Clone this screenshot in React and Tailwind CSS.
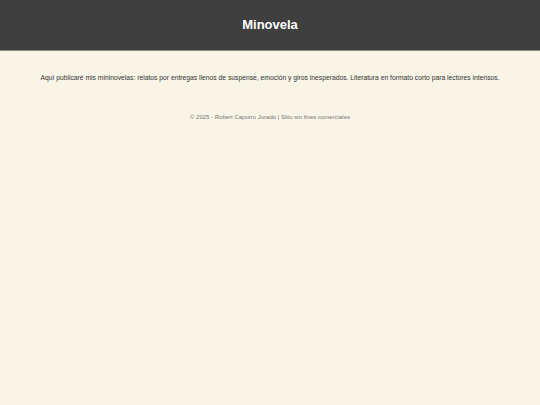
export default function App() {
  return (
    <div className="min-h-[405px] bg-[#f8f4e6] font-['Liberation_Sans',Arial,sans-serif]">
      <header className="h-[51px] bg-[#3f3f3f] border-b border-[#8a8a86] flex items-center justify-center">
        <h1 className="text-[13px] font-bold text-white">Minovela</h1>
      </header>
      <main className="pt-[22px] px-4 text-center">
        <p className="text-[6.75px] leading-[10px] text-[#333]">
          Aquí publicaré mis mininovelas: relatos por entregas llenos de suspense, emoción y giros inesperados. Literatura en formato corto para lectores intensos.
        </p>
      </main>
      <footer className="pt-[30px] text-center text-[6px] leading-[9px] text-[#777]">
        © 2025 - Robert Capurro Jurado | Sitio sin fines comerciales
      </footer>
    </div>
  );
}
